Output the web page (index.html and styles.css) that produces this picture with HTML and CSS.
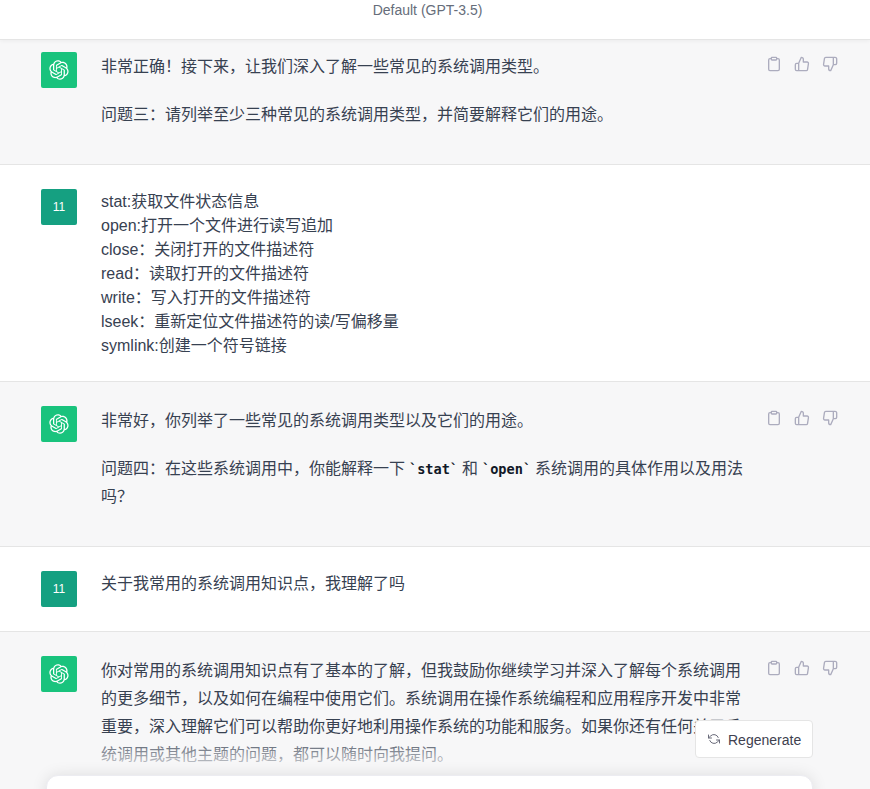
FILE: index.html
```html
<!DOCTYPE html>
<html lang="zh-CN">
<head>
<meta charset="utf-8">
<title>Default (GPT-3.5)</title>
<link rel="stylesheet" href="styles.css">
</head>
<body>
<svg class="defs" width="0" height="0" aria-hidden="true">
  <symbol id="logo" viewBox="0 0 41 41"><path fill="currentColor" d="M37.5324 16.8707C37.9808 15.5241 38.1363 14.0974 37.9886 12.6859C37.8409 11.2744 37.3934 9.91076 36.676 8.68622C35.6126 6.83404 33.9882 5.3676 32.0373 4.4985C30.0864 3.62941 27.9098 3.40259 25.8215 3.85078C24.8796 2.7893 23.7219 1.94125 22.4257 1.36341C21.1295 0.785575 19.7249 0.491269 18.3058 0.500197C16.1708 0.495044 14.0893 1.16803 12.3614 2.42214C10.6335 3.67624 9.34853 5.44666 8.6917 7.47815C7.30085 7.76286 5.98686 8.3414 4.8377 9.17505C3.68854 10.0087 2.73073 11.0782 2.02839 12.312C0.956464 14.1591 0.498905 16.2988 0.721698 18.4228C0.944492 20.5467 1.83612 22.5449 3.268 24.1293C2.81966 25.4759 2.66413 26.9026 2.81182 28.3141C2.95951 29.7256 3.40701 31.0892 4.12437 32.3138C5.18791 34.1659 6.8123 35.6322 8.76321 36.5013C10.7141 37.3704 12.8907 37.5973 14.9789 37.1492C15.9208 38.2107 17.0786 39.0587 18.3747 39.6366C19.6709 40.2144 21.0755 40.5087 22.4946 40.4998C24.6307 40.5054 26.7133 39.8321 28.4418 38.5772C30.1704 37.3223 31.4556 35.5506 32.1119 33.5179C33.5027 33.2332 34.8167 32.6547 35.9659 31.821C37.115 30.9874 38.0728 29.9178 38.7752 28.684C39.8458 26.8371 40.3023 24.6979 40.0789 22.5748C39.8556 20.4517 38.9639 18.4544 37.5324 16.8707ZM22.4978 37.8849C20.7443 37.8874 19.0459 37.2733 17.6994 36.1501C17.7601 36.117 17.8666 36.0586 17.936 36.0161L25.9004 31.4156C26.1003 31.3019 26.2663 31.137 26.3813 30.9378C26.4964 30.7386 26.5563 30.5124 26.5549 30.2825V19.0542L29.9213 20.998C29.9389 21.0068 29.9541 21.0198 29.9656 21.0359C29.977 21.052 29.9842 21.0707 29.9867 21.0902V30.3889C29.9842 32.375 29.1946 34.2791 27.7909 35.6841C26.3872 37.0892 24.4838 37.8806 22.4978 37.8849ZM6.39227 31.0064C5.51397 29.4888 5.19742 27.7107 5.49804 25.9832C5.55718 26.0187 5.66048 26.0818 5.73461 26.1244L13.699 30.7248C13.8975 30.8408 14.1233 30.902 14.3532 30.902C14.583 30.902 14.8088 30.8408 15.0073 30.7248L24.731 25.1103V28.9979C24.7321 29.0177 24.7283 29.0376 24.7199 29.0556C24.7115 29.0736 24.6988 29.0893 24.6829 29.1012L16.6317 33.7497C14.9096 34.7416 12.8643 35.0097 10.9447 34.4954C9.02506 33.9811 7.38785 32.7263 6.39227 31.0064ZM4.29707 13.6194C5.17156 12.0998 6.55279 10.9364 8.19885 10.3327C8.19885 10.4013 8.19491 10.5228 8.19491 10.6071V19.808C8.19351 20.0378 8.25334 20.2638 8.36823 20.4629C8.48312 20.6619 8.64893 20.8267 8.84863 20.9404L18.5723 26.5542L15.206 28.4979C15.1894 28.5089 15.1703 28.5155 15.1505 28.5173C15.1307 28.5191 15.1107 28.516 15.0924 28.5082L7.04046 23.8557C5.32135 22.8601 4.06716 21.2235 3.55289 19.3046C3.03862 17.3858 3.30624 15.3413 4.29707 13.6194ZM31.955 20.0556L22.2312 14.4411L25.5976 12.4981C25.6142 12.4872 25.6333 12.4805 25.6531 12.4787C25.6729 12.4769 25.6928 12.4801 25.7111 12.4879L33.7631 17.1364C34.9967 17.849 36.0017 18.8982 36.6606 20.1613C37.3194 21.4244 37.6047 22.849 37.4832 24.2684C37.3617 25.6878 36.8382 27.0432 35.9743 28.1759C35.1103 29.3086 33.9415 30.1717 32.6047 30.6641C32.6047 30.5947 32.6047 30.4733 32.6047 30.3889V21.188C32.6066 20.9586 32.5474 20.7328 32.4332 20.5338C32.319 20.3348 32.154 20.1698 31.955 20.0556ZM35.3055 15.0128C35.2464 14.9765 35.1431 14.9142 35.069 14.8717L27.1045 10.2712C26.906 10.1554 26.6803 10.0943 26.4504 10.0943C26.2206 10.0943 25.9948 10.1554 25.7963 10.2712L16.0726 15.8858V11.9982C16.0715 11.9783 16.0753 11.9585 16.0837 11.9405C16.0921 11.9225 16.1048 11.9068 16.1207 11.8949L24.1719 7.25025C25.4053 6.53903 26.8158 6.19376 28.2383 6.25482C29.6608 6.31589 31.0364 6.78077 32.2044 7.59508C33.3723 8.40939 34.2842 9.53945 34.8334 10.8531C35.3826 12.1667 35.5464 13.6095 35.3055 15.0128ZM14.2424 21.9419L10.8752 19.9981C10.8576 19.9893 10.8423 19.9763 10.8309 19.9602C10.8195 19.9441 10.8122 19.9254 10.8098 19.9058V10.6071C10.8107 9.18295 11.2173 7.78848 11.9819 6.58696C12.7466 5.38544 13.8377 4.42659 15.1275 3.82264C16.4173 3.21869 17.8524 2.99464 19.2649 3.1767C20.6775 3.35876 22.0089 3.93941 23.1034 4.85067C23.0427 4.88379 22.937 4.94215 22.8668 4.98473L14.9024 9.58517C14.7025 9.69878 14.5366 9.86356 14.4215 10.0626C14.3065 10.2616 14.2466 10.4877 14.2479 10.7175L14.2424 21.9419ZM16.071 17.9991L20.4018 15.4978L24.7325 17.9975V22.9985L20.4018 25.4983L16.071 22.9985V17.9991Z"/></symbol>
  <symbol id="copy" viewBox="0 0 24 24"><g fill="none" stroke="currentColor" stroke-width="2" stroke-linecap="round" stroke-linejoin="round"><path d="M16 4h2a2 2 0 0 1 2 2v14a2 2 0 0 1-2 2H6a2 2 0 0 1-2-2V6a2 2 0 0 1 2-2h2"/><rect x="8" y="2" width="8" height="4" rx="1" ry="1"/></g></symbol>
  <symbol id="up" viewBox="0 0 24 24"><path fill="none" stroke="currentColor" stroke-width="2" stroke-linecap="round" stroke-linejoin="round" d="M14 9V5a3 3 0 0 0-3-3l-4 9v11h11.28a2 2 0 0 0 2-1.7l1.38-9a2 2 0 0 0-2-2.3zM7 22H4a2 2 0 0 1-2-2v-7a2 2 0 0 1 2-2h3"/></symbol>
  <symbol id="down" viewBox="0 0 24 24"><path fill="none" stroke="currentColor" stroke-width="2" stroke-linecap="round" stroke-linejoin="round" d="M10 15v4a3 3 0 0 0 3 3l4-9V2H5.72a2 2 0 0 0-2 1.7l-1.38 9a2 2 0 0 0 2 2.3zm7-13h2.67A2.31 2.31 0 0 1 22 4v7a2.31 2.31 0 0 1-2.33 2H17"/></symbol>
</svg>

<header class="topbar">Default (GPT-3.5)</header>

<main class="thread">
  <section class="row bot first">
    <div class="avatar green"><svg class="logo"><use href="#logo"/></svg></div>
    <div class="msg">
      <p>非常正确！接下来，让我们深入了解一些常见的系统调用类型。</p>
      <p>问题三：请列举至少三种常见的系统调用类型，并简要解释它们的用途。</p>
    </div>
    <div class="actions">
      <svg class="act"><use href="#copy"/></svg><svg class="act"><use href="#up"/></svg><svg class="act"><use href="#down"/></svg>
    </div>
  </section>

  <section class="row user">
    <div class="avatar teal">11</div>
    <div class="msg plain">
      <div>stat:获取文件状态信息</div>
      <div>open:打开一个文件进行读写追加</div>
      <div>close：关闭打开的文件描述符</div>
      <div>read：读取打开的文件描述符</div>
      <div>write：写入打开的文件描述符</div>
      <div>lseek：重新定位文件描述符的读/写偏移量</div>
      <div>symlink:创建一个符号链接</div>
    </div>
  </section>

  <section class="row bot">
    <div class="avatar green"><svg class="logo"><use href="#logo"/></svg></div>
    <div class="msg">
      <p>非常好，你列举了一些常见的系统调用类型以及它们的用途。</p>
      <p>问题四：在这些系统调用中，你能解释一下 <code>`stat`</code> 和 <code>`open`</code> 系统调用的具体作用以及用法吗？</p>
    </div>
    <div class="actions">
      <svg class="act"><use href="#copy"/></svg><svg class="act"><use href="#up"/></svg><svg class="act"><use href="#down"/></svg>
    </div>
  </section>

  <section class="row user">
    <div class="avatar teal">11</div>
    <div class="msg plain">
      <div>关于我常用的系统调用知识点，我理解了吗</div>
    </div>
  </section>

  <section class="row bot last">
    <div class="avatar green"><svg class="logo"><use href="#logo"/></svg></div>
    <div class="msg">
      <p>你对常用的系统调用知识点有了基本的了解，但我鼓励你继续学习并深入了解每个系统调用的更多细节，以及如何在编程中使用它们。系统调用在操作系统编程和应用程序开发中非常重要，深入理解它们可以帮助你更好地利用操作系统的功能和服务。如果你还有任何关于系统调用或其他主题的问题，都可以随时向我提问。</p>
    </div>
    <div class="actions">
      <svg class="act"><use href="#copy"/></svg><svg class="act"><use href="#up"/></svg><svg class="act"><use href="#down"/></svg>
    </div>
  </section>
</main>

<div class="dock">
  <button class="regen">
    <svg class="regen-icon" viewBox="0 0 24 24"><g fill="none" stroke="currentColor" stroke-width="2" stroke-linecap="round" stroke-linejoin="round"><polyline points="1 4 1 10 7 10"/><polyline points="23 20 23 14 17 14"/><path d="M20.49 9A9 9 0 0 0 5.64 5.64L1 10m22 4l-4.64 4.36A9 9 0 0 1 3.51 15"/></g></svg>
    <span class="regen-label">Regenerate</span>
  </button>
  <div class="composer"></div>
</div>
</body>
</html>
```
FILE: styles.css
```css
* { box-sizing: border-box; }
html, body { margin: 0; padding: 0; height: 789px; overflow: hidden; background: #fff; }
body {
  position: relative;
  font-family: "Liberation Sans", "Noto Sans CJK SC", sans-serif;
  font-size: 16px;
  color: #374151;
}
.defs { position: absolute; }
.topbar {
  position: relative;
  z-index: 2;
  height: 40px;
  padding: 2px 15px 0 0;
  text-align: center;
  font-size: 14px;
  line-height: 16px;
  color: #666d7a;
  background: #fff;
  border-bottom: 1px solid #e5e5e5;
  box-shadow: 0 1px 4px rgba(0,0,0,.05);
}
.row {
  display: flex;
  padding: 24px 28px 24px 41px;
  border-bottom: 1px solid #e5e5e5;
  background: #fff;
}
.bot { background: #f7f7f8; padding-bottom: 36px; }
.first { padding-top: 12px; }
.last { border-bottom: 0; }
.avatar {
  flex: none;
  width: 36px;
  height: 36px;
  border-radius: 2px;
  display: flex;
  align-items: center;
  justify-content: center;
  color: #fff;
  font-size: 12px;
}
.green { background: #19c37d; }
.teal { background: #15a081; }
.logo { width: 20px; height: 20px; }
.msg {
  flex: none;
  width: 644px;
  margin: 1px 0 -1px 24px;
  line-height: 28px;
  word-spacing: -0.5px;
}
.msg p { margin: 0 0 20px; }
.msg p:last-child { margin-bottom: 0; }
.plain { line-height: 24px; }
code {
  font-family: "DejaVu Sans Mono", "Liberation Mono", monospace;
  font-size: 13.6px;
  line-height: 1;
  font-weight: 700;
  color: #111827;
}
.actions { margin-left: auto; display: flex; gap: 12px; padding: 4px; height: 24px; color: #acacbe; }
.act { width: 16px; height: 16px; flex: none; }
.dock {
  position: absolute;
  left: 0;
  right: 0;
  bottom: 0;
  height: 69px;
  background: linear-gradient(180deg, rgba(247,247,248,0) 22%, rgba(247,247,248,1) 80%);
}
.regen {
  position: absolute;
  right: 57px;
  top: 0;
  width: 118px;
  height: 38px;
  display: flex;
  align-items: center;
  gap: 8px;
  padding: 0 12px;
  background: #fff;
  border: 1px solid #e5e5e5;
  border-radius: 4px;
  font: inherit;
  font-size: 14px;
  color: #40414f;
}
.regen-icon { width: 12px; height: 12px; flex: none; color: #6b6c7b; }
.regen-label { margin-top: 2px; }
.composer {
  position: absolute;
  left: 46px;
  right: 57px;
  top: 55px;
  height: 40px;
  background: #fff;
  border: 1px solid #ececf1;
  border-radius: 12px;
  box-shadow: 0 0 15px rgba(0,0,0,.1);
}
```
